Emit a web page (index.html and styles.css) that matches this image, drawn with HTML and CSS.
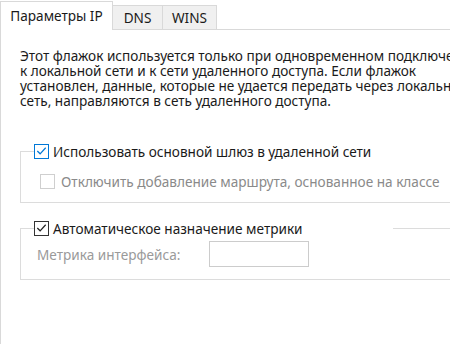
FILE: index.html
```html
<!DOCTYPE html>
<html lang="ru">
<head>
    <meta charset="UTF-8">
    <meta name="viewport" content="width=device-width, initial-scale=1.0">
    <title>Параметры IP</title>
    <link rel="stylesheet" href="styles.css">
</head>
<body>
    <div class="tabs">
        <div class="tab active">Параметры IP</div>
        <div class="tab">DNS</div>
        <div class="tab">WINS</div>
    </div>

    <div class="panel">
        <p class="note">
            Этот флажок используется только при одновременном подключении<br>
            к локальной сети и к сети удаленного доступа. Если флажок<br>
            установлен, данные, которые не удается передать через локальную<br>
            сеть, направляются в сеть удаленного доступа.
        </p>

        <div class="group gateway">
            <div class="group-head">
                <label class="check focused">
                    <span class="box">
                        <svg viewBox="0 0 14 14" width="14" height="14"><polyline points="2.5,7 5.5,10 11.5,3.5"></polyline></svg>
                    </span>
                    Использовать основной шлюз в удаленной сети
                </label>
            </div>
            <div class="group-body">
                <label class="check disabled">
                    <span class="box"></span>
                    Отключить добавление маршрута, основанное на классе
                </label>
            </div>
        </div>

        <div class="group metric">
            <div class="group-head">
                <label class="check">
                    <span class="box">
                        <svg viewBox="0 0 14 14" width="14" height="14"><polyline points="2.5,7 5.5,10 11.5,3.5"></polyline></svg>
                    </span>
                    Автоматическое назначение метрики
                </label>
                <span class="rule"></span>
            </div>
            <div class="group-body">
                <div class="field">
                    <span class="field-label">Метрика интерфейса:</span>
                    <span class="input"></span>
                </div>
            </div>
        </div>
    </div>
</body>
</html>
```

FILE: styles.css
```css
body {
    margin: 0;
    width: 450px;
    height: 344px;
    overflow: hidden;
    background-color: #fff;
    color: #1a1a1a;
    font-family: "Noto Sans", "Open Sans", sans-serif;
    font-size: 13.6px;
}

.tabs {
    display: flex;
    align-items: flex-end;
    height: 29px;
    border-bottom: 1px solid #d9d9d9;
}

.tab {
    box-sizing: border-box;
    height: 24px;
    line-height: 23px;
    text-align: center;
    background-color: #f0f0f0;
    border: 1px solid #d9d9d9;
    border-left: none;
    border-bottom: none;
}

.tab.active {
    width: 113px;
    height: 29px;
    line-height: 27px;
    margin-bottom: -1px;
    background-color: #fff;
    border-left: 1px solid #d9d9d9;
}

.tab:nth-child(2) {
    width: 50px;
}

.tab:nth-child(3) {
    width: 54px;
}

.panel {
    height: 314px;
    overflow: hidden;
    border-left: 1px solid #d9d9d9;
}

.note {
    margin: 0;
    padding: 18px 0 0 19px;
    line-height: 15px;
    white-space: nowrap;
}

.group {
    margin-left: 19px;
    width: 460px;
}

.gateway {
    margin-top: 35px;
}

.metric {
    margin-top: 17px;
}

.group-head {
    display: flex;
    height: 16px;
    align-items: center;
}

.group-head::before {
    content: "";
    align-self: stretch;
    width: 13px;
    margin-top: 8px;
    border-top: 1px solid #dcdcdc;
    border-left: 1px solid #dcdcdc;
}

.rule {
    flex: 1;
    margin-left: 90px;
    border-top: 1px solid #dcdcdc;
}

.group-body {
    box-sizing: border-box;
    height: 44px;
    border-left: 1px solid #dcdcdc;
    border-bottom: 1px solid #dcdcdc;
}

.gateway .group-body {
    padding: 14px 0 0 19px;
}

.metric .group-body {
    padding: 5px 0 0 16px;
}

.check {
    display: flex;
    align-items: center;
    gap: 4px;
    height: 16px;
    white-space: nowrap;
}

.box {
    box-sizing: border-box;
    width: 15px;
    height: 15px;
    border: 1px solid #333;
    background-color: #fff;
    display: flex;
    align-items: center;
    justify-content: center;
}

.box polyline {
    fill: none;
    stroke: #222;
    stroke-width: 1.3;
}

.check.focused .box {
    border-color: #0078d7;
}

.check.focused .box polyline {
    stroke: #0078d7;
}

.check.disabled {
    color: #8a8a8a;
    gap: 6px;
}

.check.disabled .box {
    border-color: #cfcfcf;
}

.field {
    display: flex;
    align-items: center;
}

.field-label {
    width: 172px;
    color: #9a9a9a;
}

.input {
    box-sizing: border-box;
    width: 100px;
    height: 26px;
    border: 1px solid #cccccc;
}
```
